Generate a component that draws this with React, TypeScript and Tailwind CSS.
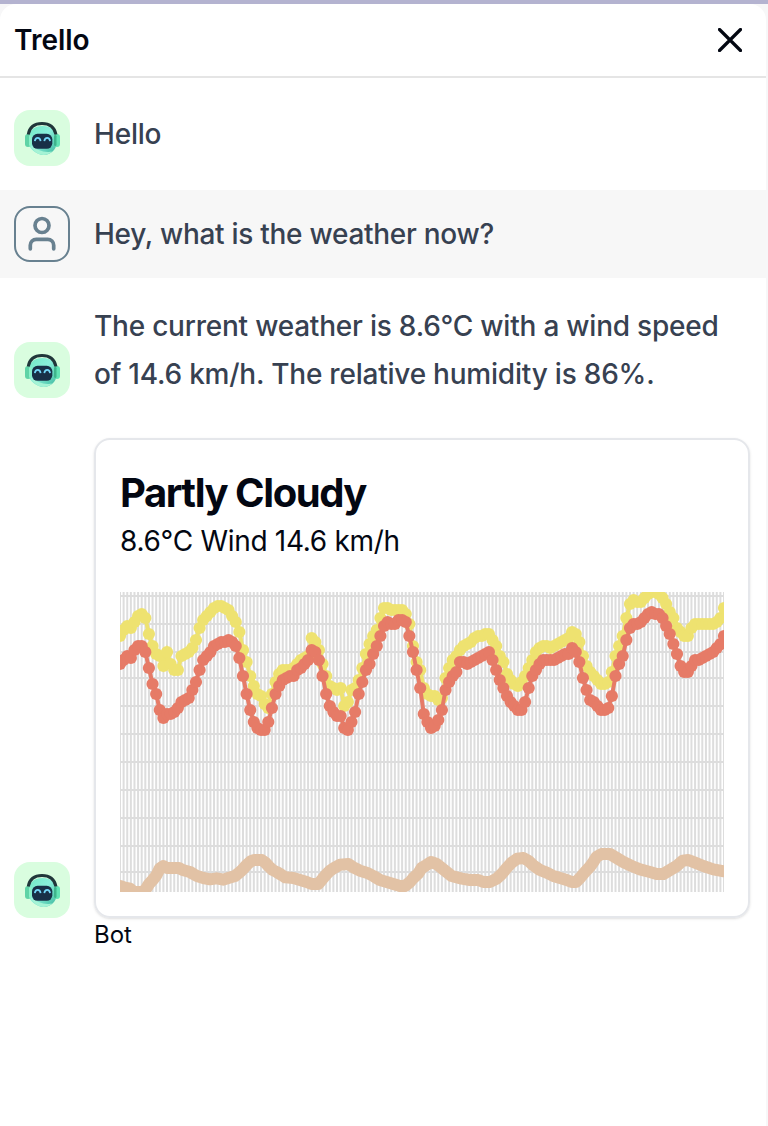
const redY = [252,240,229,234,210,198,198,216,264,312,342,390,414,400,402,396,385,366,360,354,330,306,270,240,228,216,198,192,186,186,180,186,198,234,288,342,390,426,444,450,450,426,384,342,318,300,294,288,288,270,264,252,240,210,216,240,288,342,378,396,408,408,444,450,426,396,342,306,270,252,222,198,168,138,126,132,130,120,120,126,168,216,270,324,402,426,444,438,420,390,330,306,288,276,248,246,252,246,240,234,228,222,216,240,270,300,324,348,366,378,390,390,366,324,288,270,252,240,240,240,240,234,228,222,220,204,216,246,294,330,360,366,378,390,390,384,348,288,252,228,180,144,132,132,126,114,102,96,102,102,114,138,162,192,222,258,276,276,258,240,240,234,228,222,216,204,190,168];
const yellowY = [168,150,138,144,126,108,102,114,162,198,222,228,258,216,252,270,270,228,222,216,204,180,144,120,108,96,84,78,78,84,90,108,126,156,210,246,288,318,342,348,370,384,342,306,282,270,270,270,264,252,240,234,228,174,186,210,252,288,318,324,330,324,378,366,330,324,300,264,222,192,168,150,114,84,84,90,90,90,92,102,132,198,246,270,324,342,348,348,360,354,296,264,240,228,210,198,192,186,174,168,168,162,162,180,198,228,246,282,300,312,318,306,290,264,240,216,204,198,198,202,198,192,186,180,174,156,162,186,228,258,276,288,300,310,310,306,276,228,198,168,114,72,60,64,64,54,40,36,34,40,54,72,96,114,144,156,168,168,144,132,132,132,132,132,132,126,114,84];
const tan: number[][] = [[30,168],[45,173],[60,176],[72,186],[95,186],[106,180],[117,162],[128,150],[139,136],[149,116],[160,108],[171,114],[207,114],[218,120],[240,126],[250,132],[261,138],[280,144],[300,148],[320,145],[340,149],[355,144],[375,138],[390,126],[400,116],[411,104],[422,94],[432,90],[455,90],[466,98],[477,110],[488,120],[500,126],[515,135],[526,142],[550,144],[570,150],[590,156],[605,162],[625,162],[638,146],[650,132],[660,122],[672,114],[690,104],[715,102],[730,112],[750,122],[770,128],[790,138],[810,150],[830,156],[850,162],[870,168],[885,168],[900,156],[910,144],[925,130],[935,114],[945,108],[963,96],[980,102],[995,114],[1010,126],[1025,138],[1055,146],[1080,150],[1105,150],[1120,156],[1140,156],[1160,146],[1175,132],[1190,114],[1205,98],[1222,86],[1240,84],[1255,92],[1270,106],[1290,120],[1310,128],[1330,138],[1350,144],[1370,150],[1385,156],[1398,156],[1410,144],[1425,126],[1440,110],[1450,96],[1460,80],[1475,72],[1500,72],[1520,84],[1540,96],[1565,108],[1590,118],[1620,126],[1640,132],[1660,132],[1680,120],[1700,108],[1718,92],[1735,90],[1755,98],[1780,108],[1810,118],[1842,124]];

const STEP = 604 / 167;
const toPoints = (ys: number[]) => ys.map((y, i) => [i * STEP, Math.round(y / 6) * 2 - 12]);
const path = (pts: number[][]) => pts.map(([x, y]) => `${x.toFixed(2)},${y.toFixed(2)}`).join(" ");

function Series({ ys, color }: { ys: number[]; color: string }) {
  const pts = toPoints(ys);
  return (
    <g fill={color} stroke="none">
      <polyline points={path(pts)} fill="none" stroke={color} strokeWidth="4" />
      {pts.map(([x, y], i) => (
        <circle key={i} cx={x} cy={y} r="6.100" />
      ))}
    </g>
  );
}

function Chart() {
  return (
    <svg className="mt-7 block h-[300px] w-[604px]" viewBox="0 0 604 300">
      {Array.from({ length: 168 }, (_, i) => (
        <rect key={i} x={i * STEP - 1} y="0" width="2" height="300" fill="#dddddd" />
      ))}
      {[4, 32, 60, 86, 114, 142, 170, 198, 226, 254, 280].map((y) => (
        <rect key={y} x="0" y={y - 1} width="604" height="2" fill="#dddddd" />
      ))}
      <Series ys={yellowY} color="#eee270" />
      <Series ys={redY} color="#e67b67" />
      <polyline
        points={path(tan.map(([x, y]) => [(x - 30) / 3, 238 + y / 3]))}
        fill="none"
        stroke="#e2c2a5"
        strokeWidth="12"
        strokeLinejoin="round"
        strokeLinecap="round"
      />
    </svg>
  );
}

function BotAvatar() {
  return (
    <div className="size-14 shrink-0 rounded-2xl bg-[#d9fddf]">
      <svg className="size-14" viewBox="0 0 56 56">
        <defs>
          <linearGradient id="head" x1="0" y1="0" x2="1" y2="1">
            <stop offset="0" stopColor="#72e8c4" />
            <stop offset="0.45" stopColor="#8aefdb" />
            <stop offset="0.75" stopColor="#5fd0b8" />
            <stop offset="1" stopColor="#3bb69c" />
          </linearGradient>
        </defs>
        <path d="M14 31C14 22 19 16 28.500 16S43 22 43 31C43 39.500 36.500 45 29.500 45C23 45 14 38.500 14 31Z" fill="url(#head)" />
        <path d="M16 35C19 41 24 45 29.500 45C33 45 36 43.500 38 41.500C31 43 22 40 16 35Z" fill="#a5f3d5" />
        <rect x="11" y="24" width="6" height="13" rx="3" fill="#5fd3a6" />
        <rect x="15" y="25" width="2.500" height="11" rx="1.200" fill="#8cf0c8" />
        <rect x="40" y="24" width="6" height="13" rx="3" fill="#62e4b5" />
        <rect x="40" y="25" width="2.500" height="11" rx="1.200" fill="#3fb48c" />
        <path d="M14.200 24.500C15.500 17.500 20.500 13.600 28 13.600S40.500 17.500 42 24.500" fill="none" stroke="#20363a" strokeWidth="3" />
        <rect x="18" y="23.800" width="20.300" height="15" rx="5.500" fill="#182f47" />
        <path d="M20.800 31.200C21.400 26.800 26 26.800 26.600 31.200M30.300 31.200C30.900 26.800 35.500 26.800 36.100 31.200" fill="none" stroke="#72d5f7" strokeWidth="1.700" />
      </svg>
    </div>
  );
}

export default function App() {
  return (
    <div className="h-[1126px] w-[768px] overflow-hidden bg-[#f7f7f8] font-['Inter',sans-serif] text-[#030712]">
      <div className="h-1 bg-[#b4b3d0]" />
      <main className="h-[1122px] w-[766px] rounded-t-2xl bg-white">
        <header className="flex h-[74px] items-center justify-between border-b-2 border-[#e5e5e5] pr-6 pl-[14px]">
          <h1 className="text-[28px] font-semibold">Trello</h1>
          <svg className="size-6" viewBox="0 0 24 24" fill="none" stroke="currentColor" strokeWidth="3.200" strokeLinecap="round">
            <path d="M1.500 1.500l21 21M22.500 1.500l-21 21" />
          </svg>
        </header>
        <section className="flex h-28 items-center gap-6 pl-[14px] text-[28px] font-medium tracking-[-0.2px] text-[#374151]">
          <div className="pt-2"><BotAvatar /></div>
          <p>Hello</p>
        </section>
        <section className="flex h-[88px] items-center gap-6 bg-[#f7f7f7] pl-[14px] text-[28px] font-medium tracking-[-0.28px] text-[#374151]">
          <div className="flex size-14 items-center justify-center rounded-2xl border-2 border-[#688190]">
            <svg className="size-10" viewBox="0 0 40 40" fill="none" stroke="#688190" strokeWidth="3.700" strokeLinecap="round">
              <circle cx="20" cy="11.500" r="7" />
              <path d="M8.300 34.800v-3.500a6 6 0 0 1 6-6h11.400a6 6 0 0 1 6 6v3.500" />
            </svg>
          </div>
          <p>Hey, what is the weather now?</p>
        </section>
        <section className="flex items-end gap-6 pt-6 pl-[14px] text-[28px] font-medium tracking-[-0.22px] text-[#374151]">
          <BotAvatar />
          <p className="leading-[48px]">The current weather is 8.6°C with a wind speed<br />of 14.6 km/h. The relative humidity is 86%.</p>
        </section>
        <section className="flex items-end gap-6 pt-10 pl-[14px]">
          <BotAvatar />
          <article className="h-[480px] w-[656px] rounded-2xl border-2 border-[#e5e7eb] px-6 pt-7 shadow-sm">
            <h2 className="text-[40px] leading-[50px] font-bold tracking-[-1.45px]">Partly Cloudy</h2>
            <p className="text-[28px] leading-[46px] tracking-[-0.3px]">8.6°C Wind 14.6 km/h</p>
            <Chart />
          </article>
        </section>
        <p className="pl-[94px] text-2xl leading-[34px]">Bot</p>
      </main>
    </div>
  );
}
